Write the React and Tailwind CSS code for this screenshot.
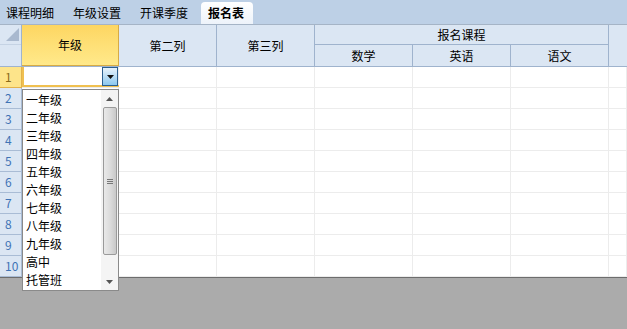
import React from "react";

const tabs = ["课程明细", "年级设置", "开课季度"];
const grades = ["一年级", "二年级", "三年级", "四年级", "五年级", "六年级", "七年级", "八年级", "九年级", "高中", "托管班"];
const cols = "grid-cols-[22px_97px_98px_98px_98px_98px_98px_18px]";
const font = { fontFamily: '"Noto Sans CJK SC", "Liberation Sans", sans-serif' };

function Tabs() {
  return (
    <div className="h-[25px] bg-[#bdd0e6] border-b border-[#a5b4c6] flex items-end text-[12px] text-black">
      <div className="flex items-center gap-[19px] h-[22px] pl-[6px] pr-[13px]">
        {tabs.map((t, i) => (
          <div key={i} className="leading-none">{t}</div>
        ))}
      </div>
      <div className="h-[22px] pl-[7px] w-[52px] rounded-t-[4px] bg-gradient-to-b from-white to-[#edf3fa] font-bold flex items-center leading-none">
        报名表
      </div>
    </div>
  );
}

function Header() {
  const cell = "bg-[#dbe6f3] border-r border-[#9fb3cd] flex items-center justify-center";
  return (
    <div className={`grid ${cols} grid-rows-[20px_21px] h-[42px] border-b border-[#9fb3cd] text-[12px]`}>
      <div className={`${cell} row-span-2 flex-col !justify-start`}>
        <div className="w-full h-[20px] border-b border-[#c5d3e4] flex items-end justify-end pr-[2px] pb-[3px]">
          <svg width="13" height="13" viewBox="0 0 13 13"><polygon points="13,0 13,13 0,13" fill="#a9b9cf" /></svg>
        </div>
      </div>
      <div className="row-span-2 bg-gradient-to-b from-[#fdd661] to-[#ffe98a] border-r border-[#d7ab45] border-b flex items-center justify-center">年级</div>
      <div className={`${cell} row-span-2`}>第二列</div>
      <div className={`${cell} row-span-2`}>第三列</div>
      <div className={`${cell} col-span-3 border-b`}>报名课程</div>
      <div className={`${cell} row-span-2 border-r-0`}></div>
      <div className={cell}>数学</div>
      <div className={cell}>英语</div>
      <div className={cell}>语文</div>
    </div>
  );
}

function Rows() {
  return (
    <div>
      {Array.from({ length: 10 }).map((_, r) => (
        <div key={r} className={`grid ${cols} h-[21px] text-[12px]`}>
          <div
            className={`border-r border-b flex items-center pl-[5px] ${
              r === 0 ? "bg-[#fde48a] border-[#e2b24c] text-[#8a6a1a]" : "bg-[#dbe6f3] border-[#a9bcd5] text-[#3f73b5]"
            }`}
          >
            {r + 1}
          </div>
          {Array.from({ length: 7 }).map((_, c) => (
            <div key={c} className="border-r border-b border-[#ececec] bg-white"></div>
          ))}
        </div>
      ))}
    </div>
  );
}

function Dropdown() {
  return (
    <>
      <div className="absolute left-[22px] top-[67px] w-[97px] h-[20px] border-2 border-[#f0c050] border-r-0 border-t-0 pointer-events-none"></div>
      <div className="absolute left-[102px] top-[67px] w-[16px] h-[19px] border border-[#2c5f8e] bg-gradient-to-b from-[#e8f3fb] to-[#8cc8ee] flex items-center justify-center">
        <svg width="7" height="4" viewBox="0 0 7 4"><polygon points="0,0 7,0 3.5,4" fill="#111" /></svg>
      </div>
      <div className="absolute left-[22px] top-[89px] w-[97px] h-[202px] border border-[#8a8a8a] bg-white flex text-[12px] text-black">
        <div className="flex-1 pl-[3px] pt-[1px]">
          {grades.map((g) => (
            <div key={g} className="h-[18px] leading-[18px]">{g}</div>
          ))}
        </div>
        <div className="w-[17px] bg-[#f4f4f4] flex flex-col items-center">
          <div className="h-[17px] flex items-center justify-center">
            <svg width="7" height="4" viewBox="0 0 7 4"><polygon points="3.5,0 7,4 0,4" fill="#555" /></svg>
          </div>
          <div className="w-[14px] h-[148px] border border-[#9a9a9a] rounded-[2px] bg-gradient-to-r from-[#e9e9e9] via-[#dcdcdc] to-[#c9c9c9] flex items-center justify-center">
            <div className="flex flex-col gap-[1px]">
              <div className="w-[6px] h-[1px] bg-[#777]" />
              <div className="w-[6px] h-[1px] bg-[#777]" />
              <div className="w-[6px] h-[1px] bg-[#777]" />
            </div>
          </div>
          <div className="flex-1 flex items-end justify-center pb-[6px]">
            <svg width="7" height="4" viewBox="0 0 7 4"><polygon points="0,0 7,0 3.5,4" fill="#555" /></svg>
          </div>
        </div>
      </div>
    </>
  );
}

export default function App() {
  return (
    <div className="w-[627px] h-[329px] bg-[#ababab] overflow-hidden relative" style={font}>
      <Tabs />
      <Header />
      <Rows />
      <div className="border-t border-[#6d6d6d]"></div>
      <Dropdown />
    </div>
  );
}
